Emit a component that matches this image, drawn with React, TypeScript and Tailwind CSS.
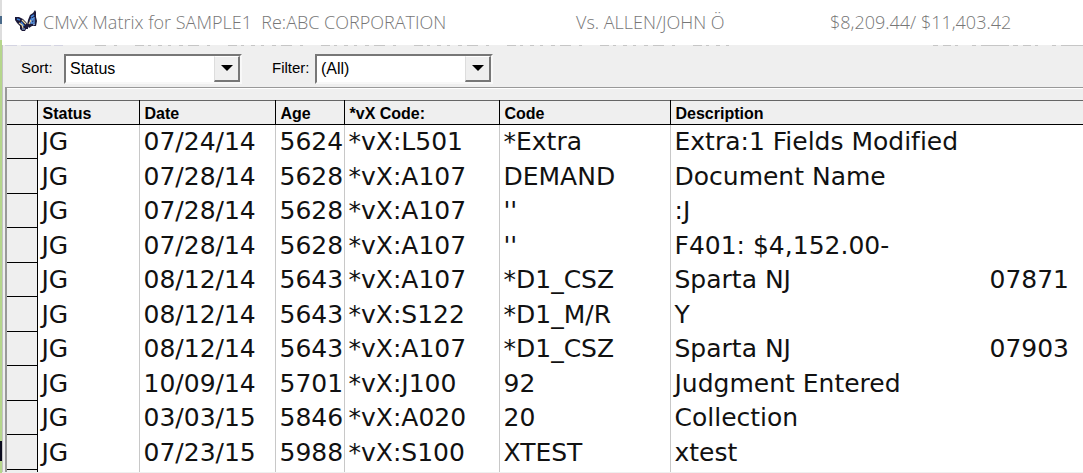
import React from "react";

const columns = ["Status", "Date", "Age", "*vX Code:", "Code", "Description"];

const rows = [
  ["JG", "07/24/14", "5624", "*vX:L501", "*Extra", "Extra:1 Fields Modified", ""],
  ["JG", "07/28/14", "5628", "*vX:A107", "DEMAND", "Document Name", ""],
  ["JG", "07/28/14", "5628", "*vX:A107", "''", ":J", ""],
  ["JG", "07/28/14", "5628", "*vX:A107", "''", "F401: $4,152.00-", ""],
  ["JG", "08/12/14", "5643", "*vX:A107", "*D1_CSZ", "Sparta NJ", "07871"],
  ["JG", "08/12/14", "5643", "*vX:S122", "*D1_M/R", "Y", ""],
  ["JG", "08/12/14", "5643", "*vX:A107", "*D1_CSZ", "Sparta NJ", "07903"],
  ["JG", "10/09/14", "5701", "*vX:J100", "92", "Judgment Entered", ""],
  ["JG", "03/03/15", "5846", "*vX:A020", "20", "Collection", ""],
  ["JG", "07/23/15", "5988", "*vX:S100", "XTEST", "xtest", ""],
];

function Butterfly() {
  return (
    <svg viewBox="0 0 24 24" className="mb-1 h-6 w-6 shrink-0" aria-hidden="true">
      <path d="M1 8 L5 8 L9 10 L12 13 L14 16 L14 20 L12 20 L11 22 L8 22 L6 20 L6 17 L3 14 L1 11 Z" fill="#1b1838" />
      <path d="M13 16 L14 11 L16 6 L19 4 L21 1 L22 3 L22 8 L23 12 L22 17 L18 17 L15 19 Z" fill="#1b1838" />
      <path d="M3 10 L6 11 M7 13 L10 17 M17 8 L20 6 M16 12 L18 9" stroke="#3f7fd6" strokeWidth="1.6" fill="none" />
      <path d="M19 9 L17 14 L20 14 L20 8" stroke="#5d9ae8" strokeWidth="1.3" fill="none" />
      <path d="M5 14 L8 16 L9 19 M8 11 L12 15 M15 15 L17 11" stroke="#ead9a6" strokeWidth="1.2" fill="none" />
      <path d="M8 20 L11 20 M19 16 L21 15" stroke="#a9c8f2" strokeWidth="1" fill="none" />
    </svg>
  );
}

function TitleShadow() {
  return (
    <svg className="block h-px w-full" aria-hidden="true">
      <line x1="2" y1="0.5" x2="62" y2="0.5" stroke="#d4d4e2" strokeDasharray="12 4 30 3 9 2" />
      <line x1="92" y1="0.5" x2="730" y2="0.5" stroke="#c6c6c6" strokeDasharray="11 8 3 18 9 4 3 7 4 6 3 8 4 5" />
      <line x1="930" y1="0.5" x2="1083" y2="0.5" stroke="#c6c6c6" strokeDasharray="5 5 8 4 3 14 4 5 28 4" />
    </svg>
  );
}

function Combo({ id, label, value }: { id: string; label: string; value: string }) {
  return (
    <div className="flex items-center">
      <label htmlFor={id} className="w-[43px] text-[15px]">{label}</label>
      <div className="relative h-[30px] w-[178px] border-2 border-t-[#777] border-r-[#f8f8f8] border-b-[#f8f8f8] border-l-[#777]">
        <select id={id} className="block h-full w-full appearance-none bg-white pl-1 text-[16px] outline-none">
          <option>{value}</option>
        </select>
        <span className="pointer-events-none absolute top-0 right-0 flex h-full w-[26px] items-center justify-center border-t border-r-2 border-b-2 border-l border-t-white border-r-[#777] border-b-[#777] border-l-[#ddd] bg-[#efefef]">
          <svg viewBox="0 0 12 6" className="h-1.5 w-3" aria-hidden="true">
            <path d="M0 0H12L6 6Z" fill="#000" />
          </svg>
        </span>
      </div>
    </div>
  );
}

export default function App() {
  return (
    <div className="flex min-h-screen overflow-hidden font-['Liberation_Sans',Arial,sans-serif] text-black">
      <div className="flex w-0.5 shrink-0 flex-col bg-[#b5d68c]">
        <div className="h-4 bg-[#ddd]" />
        <div className="h-2 bg-[#4a6a8a]" />
        <div className="h-4 bg-[#ddd]" />
        <div className="mt-auto mb-3 h-5 bg-[#0a0a1e]" />
      </div>
      <div className="min-w-0 flex-1 bg-[#efefef]">
        <header className="flex h-[45px] items-center bg-white pl-3 font-['Open_Sans','Noto_Sans',sans-serif] text-[18px] font-light whitespace-pre text-[#777]">
          <Butterfly />
          <h1 className="ml-[5px] w-[533px]">CMvX Matrix for SAMPLE1  Re:ABC CORPORATION</h1>
          <span className="w-[254px]">Vs. ALLEN/JOHN Ö</span>
          <span>$8,209.44/ $11,403.42</span>
        </header>
        <div className="border-l border-[#c4c4c4]">
          <TitleShadow />
          <div className="flex h-[41px] items-center gap-[30px] pt-1 pl-[18px]">
            <Combo id="sort" label="Sort:" value="Status" />
            <Combo id="filter" label="Filter:" value="(All)" />
          </div>
          <main className="ml-0.5 border-t border-l-2 border-[#999]">
            <div className="h-3 border-t border-white" />
            <table className="w-full table-fixed border-collapse">
              <colgroup>
                <col className="w-[30px]" />
                <col className="w-[102px]" />
                <col className="w-[136px]" />
                <col className="w-[69px]" />
                <col className="w-[155px]" />
                <col className="w-[171px]" />
                <col />
              </colgroup>
              <thead>
                <tr className="h-6 border-t border-b border-t-[#666] border-b-black">
                  <th className="border-r border-black" aria-label="Row" />
                  {columns.map((c) => (
                    <th key={c} className="border-r border-black pt-0.5 pl-[5px] text-left text-[16px] leading-5 font-bold whitespace-nowrap last:border-r-0">
                      {c}
                    </th>
                  ))}
                </tr>
              </thead>
              <tbody className="bg-white font-['DejaVu_Sans',Verdana,sans-serif] text-[25px] leading-[33px] whitespace-nowrap text-[#111] [font-variant-ligatures:none]">
                {rows.map((r, i) => (
                  <tr key={i} className="h-[34px] even:h-[35px]">
                    <td className="border-r border-b border-black bg-[#efefef]" />
                    {r.slice(0, 5).map((v, j) => (
                      <td key={j} className="border-r border-[#c8c8c8] pl-1">{v}</td>
                    ))}
                    <td className="pl-1">
                      <div className="flex">
                        <span className="w-[315px]">{r[5]}</span>
                        <span>{r[6]}</span>
                      </div>
                    </td>
                  </tr>
                ))}
                <tr className="h-0.5">
                  <td className="border-r border-black bg-[#efefef]" />
                  {columns.map((c) => (
                    <td key={c} className="border-r border-[#c8c8c8] last:border-r-0" />
                  ))}
                </tr>
              </tbody>
            </table>
          </main>
        </div>
      </div>
    </div>
  );
}
